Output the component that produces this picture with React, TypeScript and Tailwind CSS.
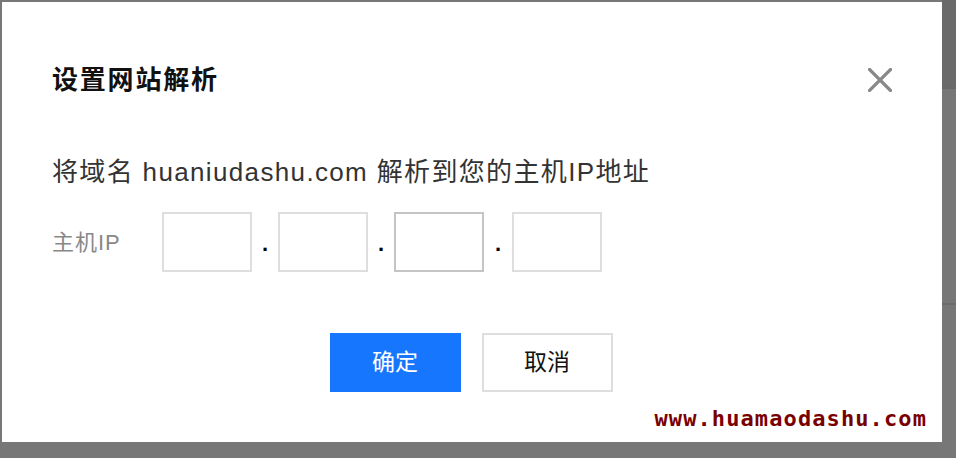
const cjk = { fontFamily: '"Liberation Sans", "Noto Sans CJK SC", sans-serif' };

const IpBox = ({ active }: { active?: boolean }) => (
  <input
    type="text"
    className={
      active
        ? "w-[90px] h-[60px] border-2 border-[#c4c4c4] bg-white outline-none"
        : "w-[90px] h-[60px] border-2 border-[#dedede] bg-white outline-none"
    }
  />
);

const Dot = ({ wide }: { wide?: boolean }) => (
  <span
    className={
      wide
        ? "w-[28px] text-center text-[22px] font-bold leading-none text-black mt-[4px]"
        : "w-[26px] text-center text-[22px] font-bold leading-none text-black mt-[4px]"
    }
  >
    .
  </span>
);

export default function App() {
  return (
    <div className="w-[956px] h-[458px] bg-[#777777] flex overflow-hidden" style={cjk}>
      <div className="pt-[2px] pl-[2px]">
        <div className="w-[940px] h-[440px] bg-white flex flex-col pl-[50px] pr-[50px]">
          {/* header */}
          <div className="flex items-center justify-between mt-[60px] h-[36px]">
            <h2 className="text-[26px] font-bold text-[#111] tracking-[1.8px]">设置网站解析</h2>
            <button className="w-[24px] h-[24px] flex items-center justify-center">
              <svg width="24" height="24" viewBox="0 0 24 24">
                <path d="M1.5 1.5 L22.5 22.5 M22.5 1.5 L1.5 22.5" stroke="#888" strokeWidth="3.2" strokeLinecap="square" />
              </svg>
            </button>
          </div>

          <p className="mt-[56px] text-[26px] leading-[36px] text-[#333] tracking-[1.35px]">
            将域名 huaniudashu.com 解析到您的主机IP地址
          </p>

          <div className="flex items-center mt-[22px]">
            <span className="w-[110px] text-[22px] text-[#888] tracking-[1px]">主机IP</span>
            <IpBox />
            <Dot />
            <IpBox />
            <Dot />
            <IpBox active />
            <Dot wide />
            <IpBox />
          </div>

          <div className="flex justify-center gap-[21px] mt-[61px] ml-[-2px]">
            <button className="w-[131px] h-[59px] bg-[#1776fe] text-white text-[23px]">确定</button>
            <button className="w-[131px] h-[59px] border-2 border-[#dedede] bg-white text-[#111] text-[23px]">取消</button>
          </div>

          <div className="flex justify-end mt-auto mb-[12px] mr-[-35px]">
            <span
              className="text-[22px] font-bold text-[#7a0000] leading-none tracking-[1.1px]"
              style={{ fontFamily: '"DejaVu Sans Mono", monospace' }}
            >
              www.huamaodashu.com
            </span>
          </div>
        </div>
      </div>
      <div className="flex-1 flex flex-col">
        <div className="h-[87px] bg-[#6a6a6a]" />
        <div className="h-[2px] bg-[#686868]" />
        <div className="h-[214px] bg-[#777777]" />
        <div className="h-[2px] bg-[#6c6c6c]" />
        <div className="flex-1 bg-[#777777]" />
      </div>
    </div>
  );
}
